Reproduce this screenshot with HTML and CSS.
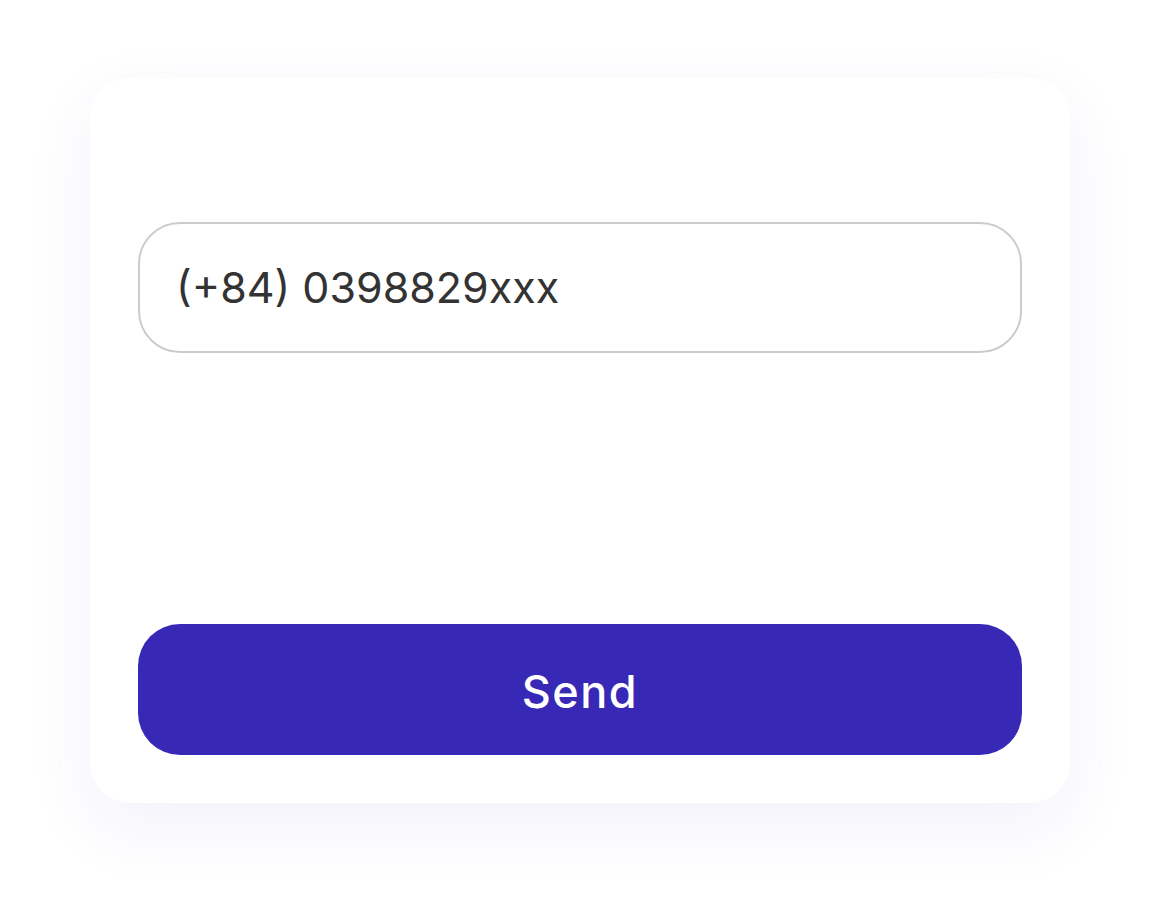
FILE: index.html
```html
<!DOCTYPE html>
<html>
<head>
<meta charset="utf-8">
<link rel="stylesheet" href="styles.css">
</head>
<body>
<div class="page">
  <div class="card">
    <div class="field">(+84) 0398829xxx</div>
    <button class="send">Send</button>
  </div>
</div>
</body>
</html>
```
FILE: styles.css
```css
html, body {
  margin: 0;
  padding: 0;
  background: #ffffff;
}
.page {
  padding: 78px 0 103px 90px;
}
.card {
  width: 980px;
  height: 725px;
  box-sizing: border-box;
  background: #ffffff;
  border-radius: 40px;
  box-shadow: 0 24px 70px rgba(70, 60, 200, 0.07);
  padding: 144px 48px 48px 48px;
  display: flex;
  flex-direction: column;
  justify-content: space-between;
}
.field {
  height: 131px;
  box-sizing: border-box;
  border: 2px solid #cccccc;
  border-radius: 42px;
  display: flex;
  align-items: center;
  padding-left: 36px;
  font-family: Inter, "Noto Sans", sans-serif;
  font-size: 43px;
  color: #333333;
  padding-bottom: 2px;
}
.send {
  height: 131px;
  width: 100%;
  border: none;
  border-radius: 42px;
  background: #3728b5;
  color: #ffffff;
  font-family: Inter, "Noto Sans", sans-serif;
  font-weight: 500;
  font-size: 45px;
  letter-spacing: 1.5px;
  padding: 3px 0 0 0;
}
```
